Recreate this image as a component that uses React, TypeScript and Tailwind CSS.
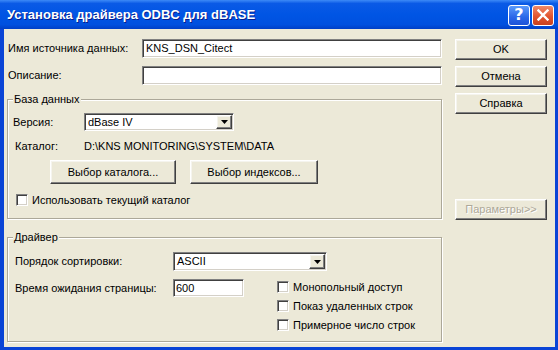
import React from "react";

const sunken =
  "bg-white border border-t-[#808080] border-l-[#808080] border-b-white border-r-white shadow-[inset_1px_1px_0_#404040,inset_-1px_-1px_0_#D4D0C8]";
const raised =
  "bg-[#ECE9D8] border border-t-white border-l-white border-b-[#404040] border-r-[#404040] shadow-[inset_-1px_-1px_0_#808080,inset_1px_1px_0_#F5F4EE]";

function Btn({ children, className = "", disabled = false }: { children: React.ReactNode; className?: string; disabled?: boolean }) {
  return (
    <div
      className={`${raised} flex items-center justify-center ${disabled ? "text-[#ACA899] [text-shadow:1px_1px_0_#FFFFFF]" : ""} ${className}`}
    >
      {children}
    </div>
  );
}

function Combo({ value, className = "" }: { value: string; className?: string }) {
  return (
    <div className={`${sunken} flex items-stretch p-[1px] ${className}`}>
      <div className="flex-1 flex items-center pl-[2px]">{value}</div>
      <div className={`${raised} w-[16px] flex items-center justify-center`}>
        <svg width="7" height="4" viewBox="0 0 7 4">
          <path d="M0 0H7L3.5 4Z" fill="#000" />
        </svg>
      </div>
    </div>
  );
}

function Check({ label, className = "" }: { label: string; className?: string }) {
  return (
    <div className={`flex items-center h-[12px] leading-[12px] ${className}`}>
      <div className={`${sunken} w-[12px] h-[12px] shrink-0`} />
      <span className="ml-[4px] whitespace-nowrap">{label}</span>
    </div>
  );
}

function Group({ title, className = "", children }: { title: string; className?: string; children: React.ReactNode }) {
  return (
    <div className={`relative border border-[#ACA899] shadow-[inset_1px_1px_0_#FFFFFF,1px_1px_0_#FFFFFF] ${className}`}>
      <div className="absolute left-[5px] top-[-7px] px-[1px] bg-[#ECE9D8] leading-[13px]">{title}</div>
      {children}
    </div>
  );
}

export default function App() {
  return (
    <div className="w-[558px] h-[350px] bg-[#0A44D6] flex flex-col font-['Liberation_Sans',sans-serif] text-[11px] text-black">
      {/* Title bar */}
      <div className="h-[29px] shrink-0 flex items-center pl-[7px] pr-[4px] bg-[linear-gradient(to_bottom,#3D8AF7_0%,#0A5AE6_12%,#0055E4_50%,#0050DF_85%,#003FC6_100%)]">
        <div className="flex-1 text-white font-bold text-[13px] font-['Liberation_Sans',sans-serif] [text-shadow:1px_1px_0_#0A1E8C] mt-[1px]">
          Установка драйвера ODBC для dBASE
        </div>
        <div className="flex gap-[2px] mt-[1px]">
          <div className="w-[22px] h-[21px] rounded-[3px] border border-white bg-[linear-gradient(to_bottom,#5B9BFB,#2A66E8_60%,#1C52D8)] flex items-center justify-center text-white font-bold text-[16px] font-['DejaVu_Sans',sans-serif] leading-none">
            ?
          </div>
          <div className="w-[22px] h-[21px] rounded-[3px] border border-white bg-[linear-gradient(to_bottom,#F08A6A,#E2552F_55%,#C8401E)] flex items-center justify-center">
            <svg width="12" height="12" viewBox="0 0 12 12">
              <path d="M1.5 1.5L10.5 10.5M10.5 1.5L1.5 10.5" stroke="#fff" strokeWidth="2.4" strokeLinecap="square" />
            </svg>
          </div>
        </div>
      </div>

      {/* Body */}
      <div className="flex-1 ml-[4px] mr-[3px] mb-[3px] bg-[#ECE9D8] flex pt-[10px] pl-[3px]">
        {/* Left column */}
        <div className="w-[435px] flex flex-col">
          <div className="flex items-center h-[19px]">
            <div className="w-[135px] pl-[1px]">Имя источника данных:</div>
            <div className={`${sunken} w-[300px] h-[19px] flex items-center pl-[3px]`}>KNS_DSN_Citect</div>
          </div>
          <div className="flex items-center h-[19px] mt-[8px]">
            <div className="w-[135px] pl-[1px]">Описание:</div>
            <div className={`${sunken} w-[300px] h-[19px]`} />
          </div>

          <Group title="База данных" className="mt-[14px] h-[120px]">
            <div className="flex flex-col pl-[5px] pt-[13px]">
              <div className="flex items-center h-[18px]">
                <div className="w-[71px]">Версия:</div>
                <Combo value="dBase IV" className="w-[150px] h-[18px]" />
              </div>
              <div className="flex items-center h-[14px] mt-[8px] pl-[2px]">
                <div className="w-[69px]">Каталог:</div>
                <div>D:\KNS MONITORING\SYSTEM\DATA</div>
              </div>
              <div className="flex mt-[7px] pl-[37px] gap-[14px]">
                <Btn className="w-[126px] h-[24px]">Выбор каталога...</Btn>
                <Btn className="w-[128px] h-[24px]">Выбор индексов...</Btn>
              </div>
              <Check label="Использовать текущий каталог" className="mt-[10px] pl-[3px]" />
            </div>
          </Group>

          <Group title="Драйвер" className="mt-[18px] h-[105px]">
            <div className="flex flex-col pl-[7px] pt-[14px]">
              <div className="flex items-center h-[19px]">
                <div className="w-[158px]">Порядок сортировки:</div>
                <Combo value="ASCII" className="w-[154px] h-[19px]" />
              </div>
              <div className="flex mt-[8px]">
                <div className="flex items-center h-[18px]">
                  <div className="w-[158px]">Время ожидания страницы:</div>
                  <div className={`${sunken} w-[71px] h-[18px] flex items-center pl-[2px]`}>600</div>
                </div>
                <div className="flex flex-col ml-[33px] mt-[2px] gap-[7px]">
                  <Check label="Монопольный доступ" />
                  <Check label="Показ удаленных строк" />
                  <Check label="Примерное число строк" />
                </div>
              </div>
            </div>
          </Group>
        </div>

        {/* Right column */}
        <div className="ml-[13px] w-[92px] flex flex-col">
          <Btn className="h-[21px]">OK</Btn>
          <Btn className="h-[21px] mt-[6px]">Отмена</Btn>
          <Btn className="h-[21px] mt-[6px]">Справка</Btn>
          <Btn disabled className="h-[21px] mt-[85px]">Параметры&gt;&gt;</Btn>
        </div>
      </div>
    </div>
  );
}
